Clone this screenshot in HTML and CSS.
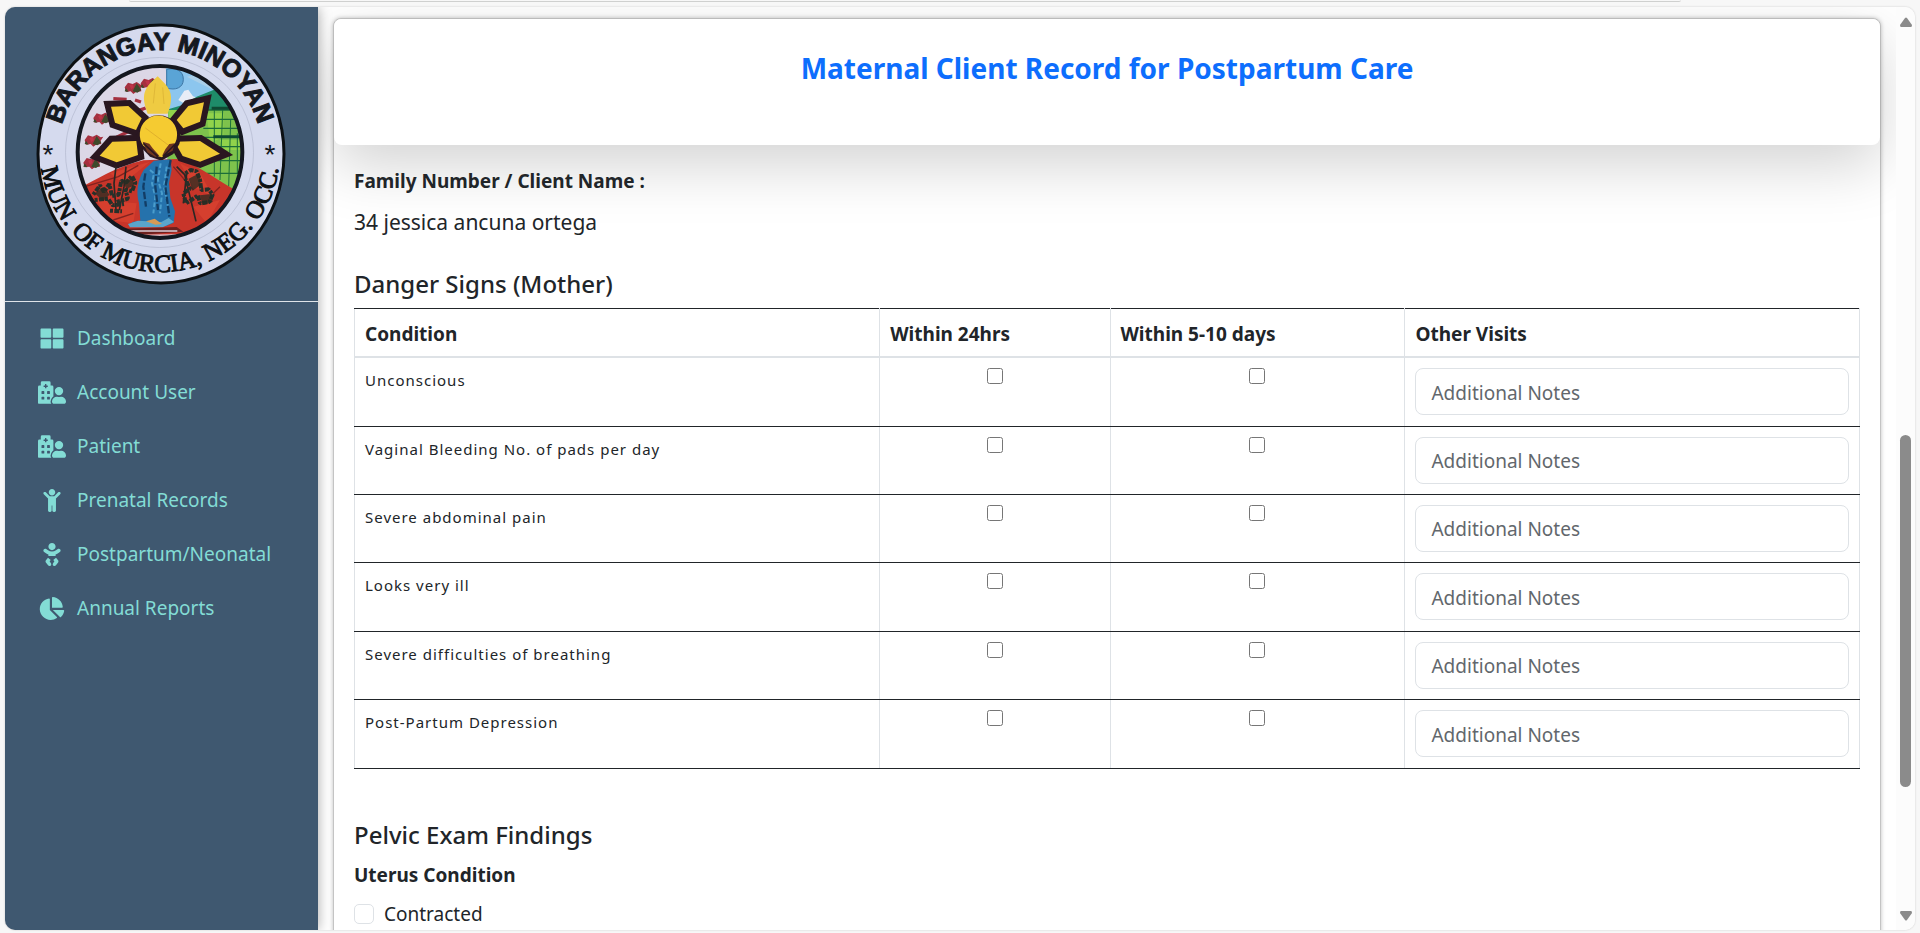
FILE: index.html
```html
<!DOCTYPE html>
<html lang="en">
<head>
<meta charset="utf-8">
<meta name="viewport" content="width=device-width, initial-scale=1">
<title>Maternal Client Record for Postpartum Care</title>
<link rel="stylesheet" href="styles.css">
</head>
<body>
<svg class="defs" aria-hidden="true">
  <symbol id="i-grid" viewBox="0 0 512 512"><path d="M296 32h192c13.3 0 24 10.700 24 24v160c0 13.300-10.700 24-24 24H296c-13.300 0-24-10.700-24-24V56c0-13.300 10.700-24 24-24zM24 32h192c13.300 0 24 10.700 24 24v160c0 13.300-10.700 24-24 24H24c-13.300 0-24-10.700-24-24V56c0-13.300 10.700-24 24-24zM24 272h192c13.300 0 24 10.700 24 24v160c0 13.300-10.700 24-24 24H24c-13.300 0-24-10.700-24-24V296c0-13.300 10.700-24 24-24zM296 272h192c13.300 0 24 10.700 24 24v160c0 13.300-10.700 24-24 24H296c-13.300 0-24-10.700-24-24V296c0-13.300 10.700-24 24-24z"/></symbol>
  <symbol id="i-hospital" viewBox="0 0 640 512"><path d="M480 320a96 96 0 1 0-96-96 96 96 0 0 0 96 96zm48 32a22.88 22.88 0 0 0-7.060 1.090 124.760 124.760 0 0 1-81.890 0A22.820 22.820 0 0 0 432 352a112 112 0 0 0-112 112.620c.14 26.260 21.730 47.380 48 47.380h224c26.270 0 47.860-21.120 48-47.380A112 112 0 0 0 528 352zm-198.090 10.450A145.190 145.190 0 0 1 352 344.620V128a32 32 0 0 0-32-32h-32V32a32 32 0 0 0-32-32H96a32 32 0 0 0-32 32v64H32a32 32 0 0 0-32 32v368a16 16 0 0 0 16 16h288.310A78.620 78.620 0 0 1 288 464.790a143.060 143.060 0 0 1 41.910-102.340zM144 404a12 12 0 0 1-12 12H92a12 12 0 0 1-12-12v-40a12 12 0 0 1 12-12h40a12 12 0 0 1 12 12zm0-128a12 12 0 0 1-12 12H92a12 12 0 0 1-12-12v-40a12 12 0 0 1 12-12h40a12 12 0 0 1 12 12zm48-122a6 6 0 0 1-6 6h-20a6 6 0 0 1-6-6v-26h-26a6 6 0 0 1-6-6v-20a6 6 0 0 1 6-6h26V70a6 6 0 0 1 6-6h20a6 6 0 0 1 6 6v26h26a6 6 0 0 1 6 6v20a6 6 0 0 1-6 6h-26zm80 250a12 12 0 0 1-12 12h-40a12 12 0 0 1-12-12v-40a12 12 0 0 1 12-12h40a12 12 0 0 1 12 12zm0-128a12 12 0 0 1-12 12h-40a12 12 0 0 1-12-12v-40a12 12 0 0 1 12-12h40a12 12 0 0 1 12 12z"/></symbol>
  <symbol id="i-child" viewBox="0 0 384 512"><path d="M120 72c0-39.765 32.235-72 72-72s72 32.235 72 72c0 39.764-32.235 72-72 72s-72-32.236-72-72zm254.627 1.373c-12.496-12.497-32.758-12.497-45.254 0L242.745 160H141.254L54.627 73.373c-12.496-12.497-32.758-12.497-45.254 0-12.497 12.497-12.497 32.758 0 45.255L104 213.254V480c0 17.673 14.327 32 32 32h16c17.673 0 32-14.327 32-32V368h16v112c0 17.673 14.327 32 32 32h16c17.673 0 32-14.327 32-32V213.254l94.627-94.627c12.497-12.497 12.497-32.757 0-45.254z"/></symbol>
  <symbol id="i-baby" viewBox="0 0 384 512"><path d="M192 160c44.200 0 80-35.800 80-80S236.200 0 192 0s-80 35.800-80 80 35.800 80 80 80zm-53.400 248.800l25.600-32-61.500-51.200L56.800 383c-11.400 14.200-11.700 34.400-.8 49l48 64c7.900 10.500 19.900 16 32 16 8.300 0 16.800-2.600 24-8 17.700-13.200 21.200-38.300 8-56l-29.400-39.200zm142.700-83.200l-61.500 51.200 25.600 32L216 448c-13.200 17.700-9.700 42.800 8 56 7.200 5.400 15.600 8 24 8 12.200 0 24.200-5.500 32-16l48-64c10.900-14.600 10.600-34.800-.8-49l-45.900-57.400zM376.700 145c-12.700-18.100-37.600-22.400-55.700-9.800l-40.600 28.500c-52.700 37-124.200 37-176.800 0L63 135.300C44.900 122.600 20 127 7.300 145-5.400 163.100-1 188 17 200.700l40.600 28.500c17 11.900 35.400 20.900 54.400 27.900V288h160v-30.800c19-7 37.400-16 54.400-27.900l40.600-28.500c18.100-12.800 22.400-37.700 9.700-55.800z"/></symbol>
  <symbol id="i-pie" viewBox="0 0 544 512"><path d="M527.79 288H290.500l158.030 158.030c6.040 6.040 15.980 6.530 22.190.68 38.700-36.460 65.320-85.610 73.130-140.860 1.340-9.460-6.510-17.850-16.060-17.850zm-15.830-64.800C503.720 103.740 408.260 8.280 288.800.04 279.680-.59 272 7.100 272 16.240V240h223.770c9.140 0 16.820-7.680 16.190-16.800zM224 288V50.710c0-9.550-8.390-17.400-17.840-16.060C86.990 51.490-4.100 155.600.14 280.370 4.500 408.510 114.830 513.590 243.030 511.980c50.400-.63 96.970-16.870 135.260-44.030 7.900-5.600 8.420-17.230 1.570-24.080L224 288z"/></symbol>
</svg>

<div class="toolbar-edge"></div>
<div class="window">
  <aside class="sidebar">
    <div class="brand">
      <svg class="seal" viewBox="0 0 250 262" role="img" aria-label="Seal of Barangay Minoyan">
        <defs>
          <clipPath id="disc"><ellipse cx="480" cy="456" rx="250" ry="260"/></clipPath>
          <path id="arc-top" d="M22 130A102 103 0 0 1 226 130"/>
          <path id="arc-bottom" d="M4 127A120 122 0 0 0 244 127"/>
          <g id="flower"><path d="M-28-2l10-14 14 4 12-6 12 8 8-2-8 12 2 10-16 2-8 6-8-8-14 2z" fill="#a5303f"/><path d="M-24 0l-4 10 12 2M8-14l14 20-12 8-14-4z" fill="#3f4a2c"/><path d="M-14-8l10-4 4 10-8 6z" fill="#bf3448"/></g>
        </defs>
        <ellipse cx="125" cy="131" rx="123" ry="129" fill="#d5daee" stroke="#0c1013" stroke-width="3"/>
        <ellipse cx="123.500" cy="129.500" rx="94" ry="95" fill="none" stroke="#b3b9cf" stroke-width="0.700"/>
        <g transform="translate(-36 -23) scale(.33333)">
          <g clip-path="url(#disc)">
            <rect x="220" y="180" width="520" height="550" fill="#dcd7e6"/>
            <path d="M496 180h250v160H505z" fill="#8cc6ee"/>
            <path d="M560 230l100-20 50 90-70-30z" fill="#a9cfe9"/>
            <path d="M500 208c28-6 50 4 50 30s-24 34-50 26z" fill="#5aa4d6" stroke="#3c75a4" stroke-width="3"/>
            <path d="M535 300l18-28 12-3 14 20 12 4-20 28z" fill="#e8edf6"/>
            <path d="M505 328l40-12 45-26 50-20 40-5 60 60v25H505z" fill="#1e8c69"/>
            <path d="M505 330h240v250H500z" fill="#7dc24c"/>
            <path d="M505 330h60l-30 40-28-10zM620 340h50v70l-40 20zM660 420h90v30h-80z" fill="#91d34b"/>
            <g stroke="#1c6e3a" stroke-width="4" fill="none"><path d="M620 330h110M610 358h120M610 385h120M600 412h130M655 440h80M640 482h90M620 520h110"/><path d="M643 330v200M668 330l-8 210M692 360l-6 200M540 325l-12 30M712 400v120" stroke-width="3"/></g>
            <path d="M635 325h110M640 410h90" stroke="#0e4b33" stroke-width="9"/>
            <path d="M235 565c55-25 110-65 195-84l100-4c50 10 105 52 170 90l-20 160H280z" fill="#c8352a"/>
            <path d="M330 520l120-35-80 65zM540 490l40 70 60 30-40-70zM290 600l120 10-10 60-80-10zM580 620l80-20-40 70z" fill="#e14a31" opacity=".5"/>
            <path d="M255 560l100-30 60-34M520 500l60 70M640 580l20-20M400 640l-60 20" stroke="#82231f" stroke-width="4" fill="none"/>
            <use href="#flower" x="402" y="264"/><use href="#flower" x="450" y="252"/><use href="#flower" x="308" y="356"/><use href="#flower" x="282" y="422"/><use href="#flower" x="278" y="490"/>
            <path d="M340 296l40 2M350 412l40-20M405 300l18 6M415 332l22-8" stroke="#a5303f" stroke-width="10"/>
            <g fill="#f1c935" stroke="#2a1720" stroke-width="36" stroke-linejoin="miter" paint-order="stroke">
              <path d="M333 320l52-2 40 37-17 35-63-22z"/>
              <path d="M612 307l-47 11-35 42 20 25 50-20z"/>
              <path d="M299 467l38-42 72-2 5 42-64 22z"/>
              <path d="M660 461l-60-38-76 2 24 43 52 17z"/>
            </g>
            <path d="M473 229l22 22c24 26 22 52 8 90h-60c-10-30-22-60 8-92z" fill="#efcb42"/>
            <path d="M466 250l-6 60M488 262l4 50" stroke="#dfb838" stroke-width="3"/>
            <path d="M414 432a66 64 0 1 1 124 0l-18 30-36 20-34-12z" fill="#2a1720"/>
            <path d="M430 437a56 57 0 1 1 92-2l-36 37-12-3z" fill="#f5cb31"/>
            <path d="M436 384l70 52" stroke="#dfb02c" stroke-width="3"/>
            <path d="M428 425l20 6 10 14 20 22-12 4-24-14zM524 430l-16 2-12 16-10 20 32-16z" fill="#6e3520"/>
            <path d="M430 430l44 40M526 432l-36 36" stroke="#2a1720" stroke-width="5"/>
            <path d="M462 482l50-4 3 32-8 40 4 44 14 40-4 34-22 10-110 2 8-14 24-4-4-52c-10-34-4-70 14-100z" fill="#2572ac"/>
            <path d="M450 510l12 10-6 30 10 40-6 50M482 490l-8 50 12 40-6 60M500 500l-8 60 12 60" stroke="#4a9dcc" stroke-width="6" stroke-dasharray="14 7" fill="none"/>
            <path d="M436 520l-6 40 8 60M470 500l-4 60 8 70M512 480l-16 80 12 90" stroke="#123d66" stroke-width="7" stroke-dasharray="22 6" fill="none"/>
            <path d="M384 672l30-10 70 4 22-12 16 12-34 16H390z" fill="#5aa6cc"/>
            <path d="M438 664l26-8 22 16-20 2z" fill="#d79a54"/>
            <path d="M370 686l160-5 20 14-140 10z" fill="#6e211f"/>
            <path d="M392 693h140M400 706l130-1" stroke="#d9ccd6" stroke-width="4"/>
            <g fill="none" stroke="#2b2724" stroke-width="5" stroke-linejoin="bevel">
              <path d="M348 500l-6 50 6 80M378 500l-6 60-14 70M530 500l24 24 34 140M560 520l-10 90"/>
            </g>
            <g fill="none" stroke="#26302a" stroke-width="12" stroke-dasharray="9 4 15 3" stroke-linejoin="bevel">
              <path d="M280 584l20-28 12 20 16-24 8 36 20-4 8-42 14 6 18-20 10 20-10 26-20-6 8 28-34 10M284 600l40-4 14 20 34-4M330 632l36 2"/>
              <path d="M556 520l16-10 18 4 10 26 4 30 22-2 12 16-10 22-28 4-6-24-20 14-16 10-8-30 20-14-14-30"/>
            </g>
            <path d="M284 580l30-20 14 24-18 20zM366 544l30-8 8 20-24 10zM566 536l32-16 4 34-24 18zM600 586l34-4 4 24-30 10z" fill="#2a2c22" opacity=".75"/>
          </g>
          <ellipse cx="480" cy="456" rx="247" ry="258" fill="none" stroke="#14171f" stroke-width="12"/>
        </g>
        <text class="seal-top"><textPath href="#arc-top" startOffset="50%">BARANGAY MINOYAN</textPath></text>
        <text class="seal-bottom"><textPath href="#arc-bottom" startOffset="50%">MUN. OF MURCIA, NEG. OCC.</textPath></text>
        <text class="seal-star" x="12" y="141">*</text>
        <text class="seal-star" x="234" y="141">*</text>
      </svg>
    </div>
    <nav class="menu">
      <a href="#"><svg class="icon"><use href="#i-grid"/></svg>Dashboard</a>
      <a href="#"><svg class="icon"><use href="#i-hospital"/></svg>Account User</a>
      <a href="#"><svg class="icon"><use href="#i-hospital"/></svg>Patient</a>
      <a href="#"><svg class="icon"><use href="#i-child"/></svg>Prenatal Records</a>
      <a href="#"><svg class="icon"><use href="#i-baby"/></svg>Postpartum/Neonatal</a>
      <a href="#"><svg class="icon"><use href="#i-pie"/></svg>Annual Reports</a>
    </nav>
  </aside>

  <main class="content">
    <div class="card">
      <header class="card-header"><h1>Maternal Client Record for Postpartum Care</h1></header>
      <div class="card-body">
        <p class="label">Family Number / Client Name :</p>
        <p class="client">34 jessica ancuna ortega</p>

        <h2 id="danger">Danger Signs (Mother)</h2>
        <table class="signs" aria-labelledby="danger">
          <colgroup><col class="c-condition"><col class="c-day"><col class="c-week"><col class="c-other"></colgroup>
          <thead>
            <tr><th scope="col">Condition</th><th scope="col">Within 24hrs</th><th scope="col">Within 5-10 days</th><th scope="col">Other Visits</th></tr>
          </thead>
          <tbody>
            <tr><td>Unconscious</td><td class="tick"><input type="checkbox" aria-label="Unconscious within 24hrs"></td><td class="tick"><input type="checkbox" aria-label="Unconscious within 5-10 days"></td><td><input class="notes" type="text" placeholder="Additional Notes" aria-label="Unconscious, other visits"></td></tr>
            <tr><td>Vaginal Bleeding No. of pads per day</td><td class="tick"><input type="checkbox" aria-label="Vaginal bleeding within 24hrs"></td><td class="tick"><input type="checkbox" aria-label="Vaginal bleeding within 5-10 days"></td><td><input class="notes" type="text" placeholder="Additional Notes" aria-label="Vaginal bleeding, other visits"></td></tr>
            <tr><td>Severe abdominal pain</td><td class="tick"><input type="checkbox" aria-label="Severe abdominal pain within 24hrs"></td><td class="tick"><input type="checkbox" aria-label="Severe abdominal pain within 5-10 days"></td><td><input class="notes" type="text" placeholder="Additional Notes" aria-label="Severe abdominal pain, other visits"></td></tr>
            <tr><td>Looks very ill</td><td class="tick"><input type="checkbox" aria-label="Looks very ill within 24hrs"></td><td class="tick"><input type="checkbox" aria-label="Looks very ill within 5-10 days"></td><td><input class="notes" type="text" placeholder="Additional Notes" aria-label="Looks very ill, other visits"></td></tr>
            <tr><td>Severe difficulties of breathing</td><td class="tick"><input type="checkbox" aria-label="Severe difficulties of breathing within 24hrs"></td><td class="tick"><input type="checkbox" aria-label="Severe difficulties of breathing within 5-10 days"></td><td><input class="notes" type="text" placeholder="Additional Notes" aria-label="Severe difficulties of breathing, other visits"></td></tr>
            <tr><td>Post-Partum Depression</td><td class="tick"><input type="checkbox" aria-label="Post-partum depression within 24hrs"></td><td class="tick"><input type="checkbox" aria-label="Post-partum depression within 5-10 days"></td><td><input class="notes" type="text" placeholder="Additional Notes" aria-label="Post-partum depression, other visits"></td></tr>
          </tbody>
        </table>

        <h2 class="pelvic">Pelvic Exam Findings</h2>
        <p class="label uterus">Uterus Condition</p>
        <label class="check"><input type="checkbox">Contracted</label>
      </div>
    </div>
  </main>

  <div class="scrollbar" aria-hidden="true">
    <svg class="arrow" viewBox="0 0 12 10"><path d="M5 1Q6 0 7 1L12 8Q12 10 11 10H1Q0 10 0 8z"/></svg>
    <div class="track"><div class="thumb"></div></div>
    <svg class="arrow" viewBox="0 0 12 10"><path d="M5 9Q6 10 7 9L12 2Q12 0 11 0H1Q0 0 0 2z"/></svg>
  </div>
</div>
</body>
</html>
```
FILE: styles.css
```css
* { box-sizing: border-box; }

body {
  margin: 0;
  height: 100vh;
  padding: 0 5px 3px;
  display: flex;
  flex-direction: column;
  overflow: hidden;
  background: #f7f7f7;
  color: #212529;
  font: 19px/30px "Noto Sans", "Open Sans", sans-serif;
}

h1, h2, p { margin: 0; }

.defs { position: absolute; width: 0; height: 0; }

/* lower rim of the address bar above the page */
.toolbar-edge {
  flex: none;
  height: 2px;
  margin: 0 234px 5px 124px;
  border-bottom: 1px solid #cfd0cf;
  border-radius: 0 0 12px 12px;
}

.window {
  flex: 1;
  min-height: 0;
  display: flex;
  overflow: hidden;
  border-radius: 10px;
  background: #fff;
  box-shadow: 0 0 2px #c4c4c4;
}

.sidebar {
  position: relative;
  z-index: 1;
  flex: none;
  width: 313px;
  background: #3f5870;
  box-shadow: 0 0 12px rgba(0, 0, 0, .35);
}

.brand {
  padding: 16px 31px;
  border-bottom: 1px solid #dfe4e9;
}

.seal { display: block; width: 250px; height: 262px; }

.seal-top {
  font: bold 25px "Liberation Sans", Arial, sans-serif;
  text-anchor: middle;
  fill: #14181f;
  stroke: #14181f;
  stroke-width: 1px;
}

.seal-bottom {
  font: 25px "Liberation Serif", "Times New Roman", serif;
  text-anchor: middle;
  fill: #0d1013;
  stroke: #0d1013;
  stroke-width: 1px;
}

.seal-star {
  font: 28px "Liberation Sans", Arial, sans-serif;
  text-anchor: middle;
  fill: #14181f;
}

.menu { padding-top: 9px; }

.menu a {
  display: flex;
  align-items: center;
  gap: 11px;
  height: 54px;
  padding-left: 33px;
  color: #83dcd5;
  text-decoration: none;
}

.icon { width: 28px; height: 23px; fill: currentColor; }

.content {
  flex: 1;
  min-width: 0;
  overflow: hidden;
  padding: 11px 15px 0;
}

.card {
  border: 1px solid #c4c4c4;
  border-radius: 8px;
  box-shadow: 0 0 4px rgba(0, 0, 0, .25);
  background: #fff;
}

.card-header {
  padding: 30px 20px 58px;
  border-radius: 8px;
  background: #fff;
  box-shadow: 0 20px 60px rgba(0, 0, 0, .175);
  text-align: center;
}

h1 {
  color: #0d6efd;
  font-size: 28px;
  line-height: 38px;
  font-weight: 700;
}

.card-body { position: relative; padding: 21px 20px; }

.label { font-weight: 700; }

.client { margin-top: 8px; font-size: 21px; line-height: 36px; }

h2 {
  margin: 29px 0 9px;
  font-size: 24px;
  line-height: 30px;
  font-weight: 500;
}

.signs {
  width: 100%;
  height: 461px;
  table-layout: fixed;
  border-collapse: collapse;
  border-left: 1px solid #dee2e6;
  border-right: 1px solid #dee2e6;
}

.c-condition { width: 34.9%; }
.c-day { width: 15.3%; }
.c-week { width: 19.6%; }
.c-other { width: 30.2%; }

.signs th, .signs td {
  padding: 10px;
  text-align: left;
  vertical-align: top;
  border-right: 1px solid #dee2e6;
  border-bottom: 1px solid #212529;
}

.signs th {
  padding: 10px 10px 7px;
  border-top: 1px solid #212529;
  border-bottom: 2px solid #dee2e6;
}

.signs td {
  font-size: 15px;
  line-height: 24px;
  letter-spacing: 1px;
}

.signs .tick { text-align: center; line-height: 16px; }

.tick input { width: 16px; height: 16px; margin: 0; vertical-align: top; }

.notes {
  display: block;
  width: 100%;
  height: 47px;
  padding: 2px 15px 0;
  border: 1px solid #dee2e6;
  border-radius: 8px;
  background: #fff;
  color: #212529;
  font: inherit;
  font-size: 19px;
  letter-spacing: 0;
}

.notes::placeholder { color: #62676c; opacity: 1; }

.pelvic { margin: 51px 0 10px; }

.check { display: flex; align-items: center; gap: 10px; margin-top: 9px; }

.check input {
  appearance: none;
  width: 20px;
  height: 20px;
  margin: 0;
  border: 1px solid #dee2e6;
  border-radius: 5px;
  background: #fff;
}

.scrollbar {
  flex: none;
  width: 19px;
  padding: 10px 0 9px;
  display: flex;
  flex-direction: column;
  align-items: center;
  background: #fcfcfc;
}

.arrow { flex: none; width: 12px; height: 10px; fill: #8b8b8b; }

.track { flex: 1; width: 11px; padding: 408px 0 124px; }

.thumb { height: 100%; border-radius: 6px; background: #8b8b8b; }
```
